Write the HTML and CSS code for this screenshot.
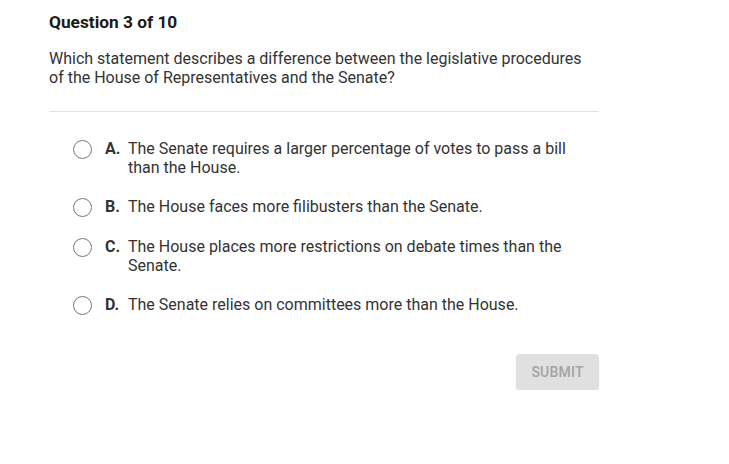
FILE: index.html
```html
<!DOCTYPE html>
<html>
<head>
<meta charset="utf-8">
<link rel="stylesheet" href="styles.css">
</head>
<body>
<div class="quiz">
  <h1 class="title">Question 3 of 10</h1>
  <p class="prompt">Which statement describes a difference between the legislative procedures of the House of Representatives and the Senate?</p>
  <hr class="divider">
  <ul class="options">
    <li class="option"><span class="radio"></span><span class="letter">A.</span><span class="text">The Senate requires a larger percentage of votes to pass a bill than the House.</span></li>
    <li class="option"><span class="radio"></span><span class="letter">B.</span><span class="text">The House faces more filibusters than the Senate.</span></li>
    <li class="option"><span class="radio"></span><span class="letter">C.</span><span class="text">The House places more restrictions on debate times than the Senate.</span></li>
    <li class="option"><span class="radio"></span><span class="letter">D.</span><span class="text">The Senate relies on committees more than the House.</span></li>
  </ul>
  <div class="actions"><button class="submit">SUBMIT</button></div>
</div>
</body>
</html>
```
FILE: styles.css
```css
html, body { margin: 0; padding: 0; background: #fff; }
body { font-family: Roboto, "Noto Sans", sans-serif; color: #333; }
.quiz { width: 550px; padding: 12px 0 0 49px; }
.title { margin: 0; font-size: 17.3px; font-weight: 700; color: #1a1a1a; line-height: 20px; }
.prompt { margin: 17px 0 0; font-size: 16px; line-height: 19px; color: #333; }
.divider { margin: 24px 0 0; border: 0; border-top: 1px solid #e2e2e2; height: 0; }
.options { list-style: none; margin: 27px 0 0; padding: 0 0 0 24px; display: flex; flex-direction: column; gap: 20px; }
.option { display: grid; grid-template-columns: 20px 23px 1fr; column-gap: 12px; align-items: start; font-size: 16px; line-height: 19px; }
.radio { width: 17px; height: 17px; border: 1.5px solid #777; border-radius: 50%; margin-top: 1px; }
.letter { font-weight: 700; color: #333; }
.text { margin-left: -12px; }
.actions { display: flex; justify-content: flex-end; margin-top: 39px; }
.submit { width: 83px; height: 36px; border: 0; border-radius: 4px; background: #e0e0e0; color: #a3a3a3; font-family: Roboto, sans-serif; font-size: 14px; font-weight: 500; letter-spacing: 0.2px; box-shadow: 0 1px 2px rgba(0,0,0,0.08); }
```
